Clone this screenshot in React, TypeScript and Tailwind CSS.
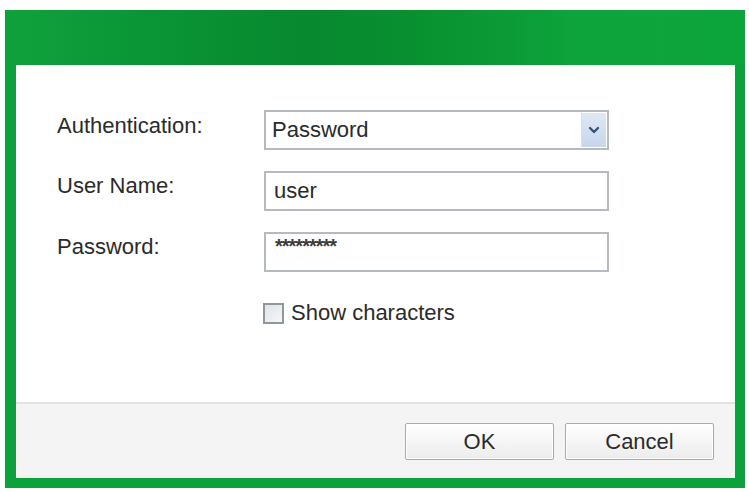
import { ChevronDown } from "lucide-react";

const font = "font-['Liberation_Sans',Arial,sans-serif]";

function TextField({ value, small }: { value: string; small?: boolean }) {
  return (
    <div className="h-[40px] w-[345px] border-2 border-[#b5bac1] bg-white pl-[8px] flex items-center">
      {small ? (
        <span className="text-[20px] font-bold leading-none tracking-[-1px] text-[#3a3a3a] ml-[1px] -mt-[12px]">{value}</span>
      ) : (
        <span className="text-[22px] leading-none text-[#2a2a2a]">{value}</span>
      )}
    </div>
  );
}

function Button({ label }: { label: string }) {
  return (
    <button className="h-[37px] w-[149px] rounded-[2px] border border-[#a9a9a9] bg-gradient-to-b from-white to-[#ececec] text-[22px] leading-none text-[#2a2a2a] shadow-[inset_0_0_0_1px_#ffffff]">
      {label}
    </button>
  );
}

export default function App() {
  return (
    <div className={`w-[749px] h-[492px] bg-white pt-[10px] pl-[5px] ${font}`}>
      <div className="w-[740px] h-[478px] bg-[#0ba23b] flex flex-col pl-[11px] pr-[10px] pb-[10px]">
        <div className="h-[55px] -ml-[11px] -mr-[10px] bg-[linear-gradient(90deg,#10a13c_0%,#0a9636_18%,#07892f_40%,#08902f_55%,#0ea43c_78%,#0ba53b_100%)]" />
        <div className="flex-1 flex flex-col bg-white">
          <div className="flex-1 pt-[45px] pl-[41px]">
            <div className="grid grid-cols-[207px_345px] gap-y-[21px] items-start">
              <span className="text-[22px] leading-none text-[#2a2a2a] pt-[5px]">Authentication:</span>
              <div className="relative h-[40px] w-[345px] border-2 border-[#b5bac1] bg-white pl-[6px] flex items-center">
                <span className="text-[22px] leading-none text-[#2a2a2a]">Password</span>
                <div className="absolute right-[1px] top-[1px] bottom-[1px] w-[25px] bg-gradient-to-b from-[#dfe8f5] to-[#c7d6ec] border-l border-[#d8e0ea] flex items-center justify-center">
                  <ChevronDown className="w-[16px] h-[16px] text-[#34507e]" strokeWidth={3.5} />
                </div>
              </div>

              <span className="text-[22px] leading-none text-[#2a2a2a] pt-[4px]">User Name:</span>
              <TextField value="user" />

              <span className="text-[22px] leading-none text-[#2a2a2a] pt-[4px]">Password:</span>
              <TextField value="*********" small />

              <span />
              <label className="flex items-center gap-[7px] mt-[9px] -ml-[1px]">
                <span className="w-[21px] h-[21px] border-2 border-[#8f979f] bg-gradient-to-br from-[#dfe3e8] to-[#f6f7f9]" />
                <span className="text-[22px] leading-none text-[#2a2a2a]">Show characters</span>
              </label>
            </div>
          </div>
          <div className="h-[76px] border-t-2 border-[#e2e2e2] bg-[#f4f4f4] flex justify-end gap-[11px] pt-[19px] pr-[21px]">
            <Button label="OK" />
            <Button label="Cancel" />
          </div>
        </div>
      </div>
    </div>
  );
}
